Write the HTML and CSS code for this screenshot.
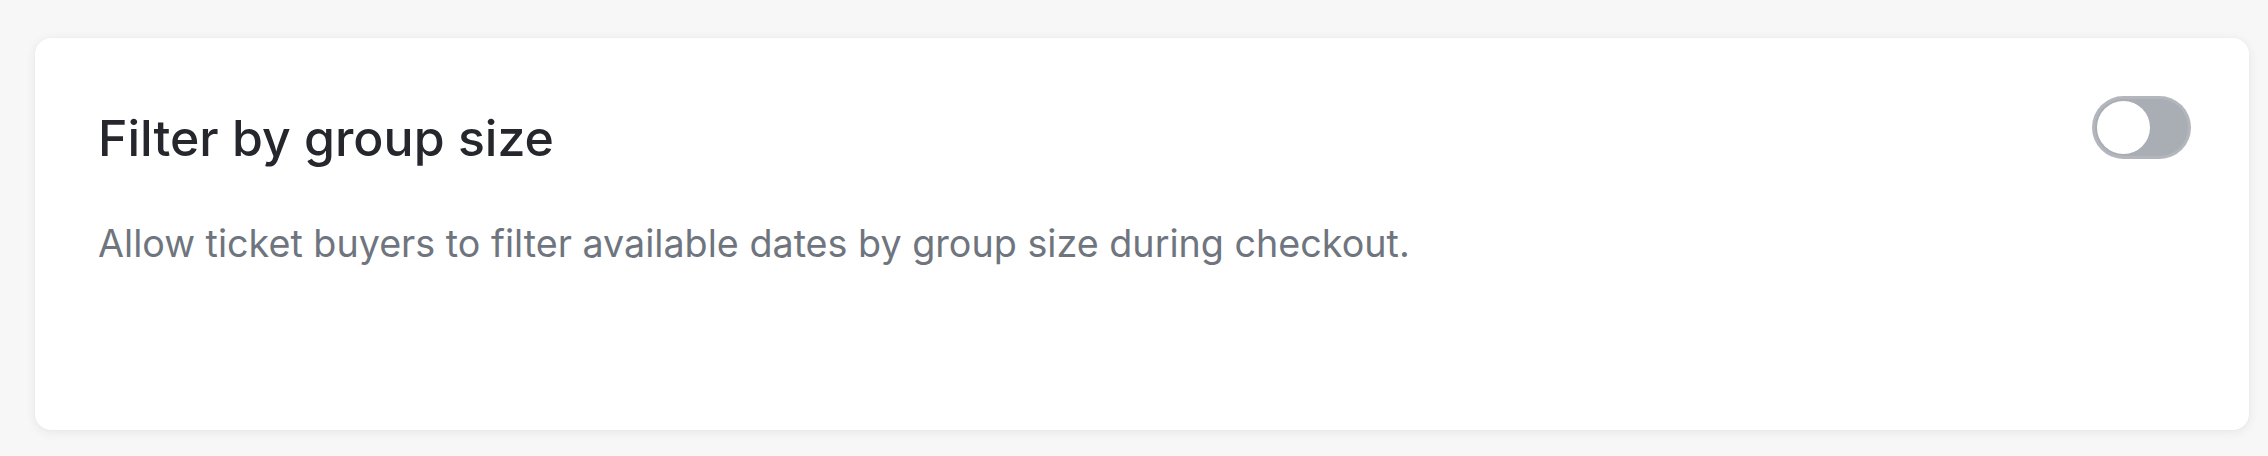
FILE: index.html
```
<!DOCTYPE html>
<html>
<head>
    <meta charset="UTF-8">
    <title>Group size filter</title>
    <link rel="stylesheet" href="styles.css">
</head>
<body>
    <div class="card">
        <div class="card-header">
            <div class="card-title">Filter by group size</div>
            <div class="toggle"><div class="toggle-knob"></div></div>
        </div>
        <div class="card-text">Allow ticket buyers to filter available dates by group size during checkout.</div>
    </div>
</body>
</html>
```

FILE: styles.css
```
body {
    font-family: 'Inter', 'Noto Sans', sans-serif;
    margin: 0;
    padding: 38px 19px 26px 35px;
    background-color: #f7f7f7;
}
.card {
    background-color: #fff;
    border-radius: 16px;
    height: 392px;
    box-sizing: border-box;
    padding: 58px 58px 0 63px;
    box-shadow: 0 2px 12px rgba(0, 0, 0, 0.07), 0 0 2px rgba(0, 0, 0, 0.04);
}
.card-header {
    display: flex;
    justify-content: space-between;
    align-items: flex-start;
}
.card-title {
    font-size: 50px;
    font-weight: 500;
    color: #25272c;
    margin-top: 17px;
    line-height: 1;
}
.toggle {
    width: 99px;
    height: 63px;
    border-radius: 32px;
    background-color: #a9aeb4;
    padding: 5px;
    box-sizing: border-box;
    box-shadow: inset 0 0 0 3px rgba(255, 255, 255, 0.12);
}
.toggle-knob {
    width: 53px;
    height: 53px;
    border-radius: 50%;
    background-color: #fff;
}
.card-text {
    font-size: 37.7px;
    line-height: 1;
    color: #6f757e;
    margin-top: 62px;
}
```
